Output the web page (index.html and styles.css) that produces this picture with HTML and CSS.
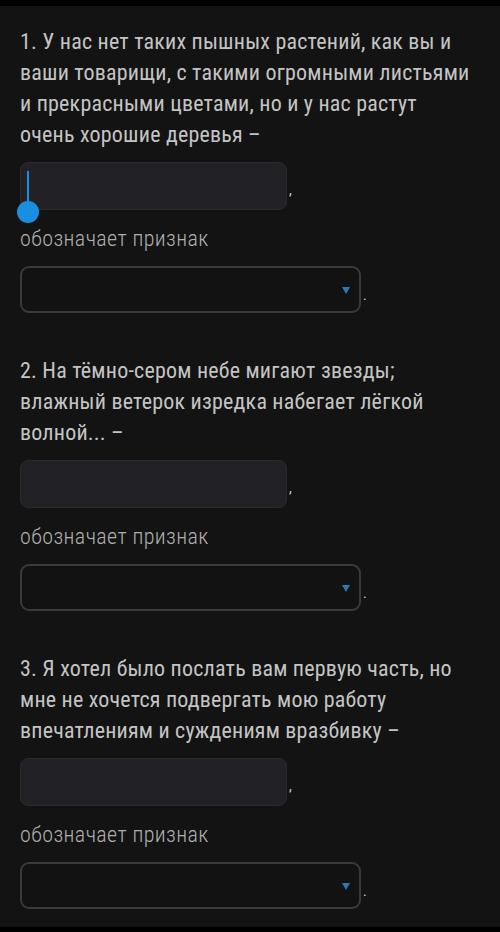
FILE: index.html
```html
<!DOCTYPE html>
<html lang="ru">
<head>
  <meta charset="UTF-8">
  <title>Признаки</title>
  <link rel="stylesheet" href="styles.css">
</head>
<body>
<div class="topbar"></div>
<div class="page">
  <div class="question">
    <p class="qtext">1. У нас нет таких пышных растений, как вы и ваши товарищи, с такими огромными листьями и прекрасными цветами, но и у нас растут очень хорошие деревья –</p>
    <div class="answer">
      <div class="field focused">
        <span class="cursor"></span>
        <span class="handle"></span>
      </div>
      <span class="comma">,</span>
    </div>
    <p class="label">обозначает признак</p>
    <div class="answer">
      <div class="select"><span class="arrow"></span></div>
      <span class="dot">.</span>
    </div>
  </div>

  <div class="question">
    <p class="qtext">2. На тёмно-сером небе мигают звезды; влажный ветерок изредка набегает лёгкой волной... –</p>
    <div class="answer">
      <div class="field"></div>
      <span class="comma">,</span>
    </div>
    <p class="label">обозначает признак</p>
    <div class="answer">
      <div class="select"><span class="arrow"></span></div>
      <span class="dot">.</span>
    </div>
  </div>

  <div class="question">
    <p class="qtext">3. Я хотел было послать вам первую часть, но мне не хочется подвергать мою работу впечатлениям и суждениям вразбивку –</p>
    <div class="answer">
      <div class="field"></div>
      <span class="comma">,</span>
    </div>
    <p class="label">обозначает признак</p>
    <div class="answer">
      <div class="select"><span class="arrow"></span></div>
      <span class="dot">.</span>
    </div>
  </div>
</div>
<div class="bottombar"></div>
</body>
</html>
```

FILE: styles.css
```css
	body {
		margin: 0;
		background-color: #131313;
		font-family: "Roboto Condensed", Roboto, "Noto Sans", sans-serif;
		font-stretch: condensed;
		color: #c4c4c4;
	}
	.topbar {
		height: 6px;
		background-color: #000;
	}
	.bottombar {
		height: 5px;
		background-color: #000;
	}
	.page {
		height: 921px;
		padding: 20px 20px 0 20px;
		box-sizing: border-box;
		overflow: hidden;
	}
	.question { margin-bottom: 42px; }

	.qtext {
		margin: 0 0 12px 0;
		font-size: 22px;
		line-height: 31px;
		letter-spacing: 0.2px;
		max-width: 452px;
	}
	.label {
		margin: 13px 0 12px 0;
		font-size: 22px;
		font-weight: 300;
		line-height: 31px;
		letter-spacing: 0.4px;
		color: #b0b0b0;
	}
	.answer {
		display: flex;
		align-items: center;
	}
	.field {
		position: relative;
		width: 267px;
		height: 48px;
		background-color: #222226;
		border: 1px solid #2a2a2e;
		border-radius: 8px;
		box-sizing: border-box;
	}
	.comma, .dot {
		font-size: 14px;
		line-height: 1;
		margin-left: 2px;
		color: #d0d0d0;
	}
	.comma { margin-top: 8px; }
	.dot { margin-top: 10px; }

	.select {
		position: relative;
		width: 341px;
		height: 47px;
		border: 2px solid #3a3a3a;
		border-radius: 9px;
		box-sizing: border-box;
		background-color: #121212;
	}
	.arrow {
		position: absolute;
		right: 9px;
		top: 19px;
		width: 0;
		height: 0;
		border-left: 4px solid transparent;
		border-right: 4px solid transparent;
		border-top: 7px solid #2d78b4;
	}
	/* text selection cursor over the first field */
	.cursor {
		position: absolute;
		left: 6px;
		top: 8px;
		width: 2px;
		height: 32px;
		background-color: #1a8fe0;
	}
	.handle {
		position: absolute;
		left: -4px;
		top: 38px;
		width: 22px;
		height: 22px;
		border-radius: 50%;
		background-color: #1a8fe0;
	}
```
